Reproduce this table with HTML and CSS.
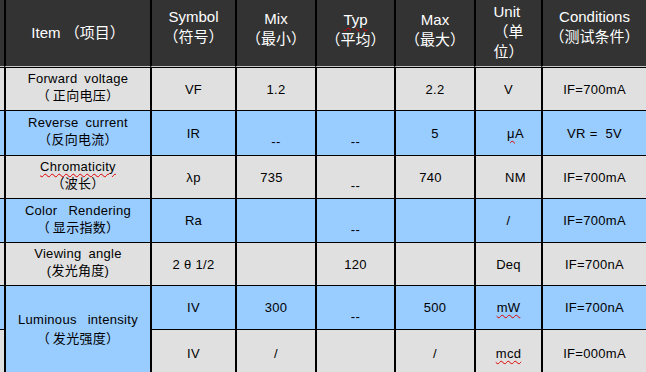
FILE: index.html
```html
<!DOCTYPE html>
<html>
<head>
<meta charset="utf-8">
<link rel="stylesheet" href="styles.css">
</head>
<body>
<div class="sheet">
  <div class="c s h"></div>
  <div class="c h">Item （项目）</div>
  <div class="c h p12">Symbol<br>（符号）</div>
  <div class="c h p9">Mix<br>（最小）</div>
  <div class="c h p7"><span><span class="sq">Typ</span><br>（平均）</span></div>
  <div class="c h p7">Max<br>（最大）</div>
  <div class="c h p2"><span class="ublk">Unit<br>（单<br>位）</span></div>
  <div class="c h p12">Conditions<br>（测试条件）</div>

  <div class="c s g"></div>
  <div class="c g lbl"><span>Forward voltage<br><span class="cn">（ 正向电压）</span></span></div>
  <div class="c g">VF</div>
  <div class="c g">1.2</div>
  <div class="c g"></div>
  <div class="c g">2.2</div>
  <div class="c g">V</div>
  <div class="c g">IF=700mA</div>

  <div class="c s b"></div>
  <div class="c b lbl">Reverse current<br>（反向电流）</div>
  <div class="c b">IR</div>
  <div class="c b low">--</div>
  <div class="c b low">--</div>
  <div class="c b">5</div>
  <div class="c b rt"><span class="sq">μ</span>A</div>
  <div class="c b">VR =&nbsp; 5V</div>

  <div class="c s g"></div>
  <div class="c g lbl"><span><span class="sq">Chromaticity</span><br>（波长）</span></div>
  <div class="c g">λp</div>
  <div class="c g lf">735</div>
  <div class="c g low">--</div>
  <div class="c g lf">740</div>
  <div class="c g rt">NM</div>
  <div class="c g">IF=700mA</div>

  <div class="c s b"></div>
  <div class="c b lbl wide"><span>Color Rendering<br><span class="cn">（ 显示指数）</span></span></div>
  <div class="c b">Ra</div>
  <div class="c b"></div>
  <div class="c b low">--</div>
  <div class="c b"></div>
  <div class="c b">/</div>
  <div class="c b">IF=700mA</div>

  <div class="c s g"></div>
  <div class="c g lbl">Viewing angle<br>(发光角度)</div>
  <div class="c g">2 θ 1/2</div>
  <div class="c g"></div>
  <div class="c g">120</div>
  <div class="c g"></div>
  <div class="c g">Deq</div>
  <div class="c g">IF=700nA</div>

  <div class="c s b"></div>
  <div class="c b lbl wide span2"><span>Luminous intensity<br><span class="cn">（ 发光强度）</span></span></div>
  <div class="c b">IV</div>
  <div class="c b">300</div>
  <div class="c b low">--</div>
  <div class="c b">500</div>
  <div class="c b"><span class="sq">mW</span></div>
  <div class="c b">IF=700nA</div>

  <div class="c s g"></div>
  <div class="c g dn">IV</div>
  <div class="c g dn">/</div>
  <div class="c g"></div>
  <div class="c g dn">/</div>
  <div class="c g dn"><span class="sq">mcd</span></div>
  <div class="c g dn">IF=000mA</div>
</div>
</body>
</html>
```
FILE: styles.css
```css
* { box-sizing: border-box; }
html, body { margin: 0; padding: 0; }
body {
  background: #fff;
  width: 646px;
  height: 372px;
  overflow: hidden;
  font-family: "Liberation Sans", Arial, "Noto Sans CJK SC", sans-serif;
}
.sheet {
  display: grid;
  grid-template-columns: 4px 146px 85px 80px 79px 80px 67px 105px;
  grid-template-rows: 67px 43px 45px 43px 44px 43px 44px 43px;
}
.c {
  border-left: 2px solid #000;
  border-top: 1px solid #000;
  display: flex;
  align-items: center;
  justify-content: center;
  text-align: center;
  font-size: 13px;
  line-height: 17px;
  color: #000;
  letter-spacing: 0.3px;
  white-space: nowrap;
}
.s { border-left: 0; }
.h {
  background: #333;
  color: #fff;
  border-top: 0;
  border-bottom: 1px solid #c8c8c8;
  font-size: 15px;
  line-height: 20px;
  letter-spacing: 0;
}
.g { background: #e0e0e0; }
.b { background: #99ccff; }
.p12 { padding-bottom: 12px; }
.p9 { padding-bottom: 9px; }
.p7 { padding-bottom: 7px; }
.p2 { padding-bottom: 2px; }
.ublk { display: inline-block; text-align: left; }
.lbl { padding-bottom: 4px; word-spacing: 3px; }
.wide { word-spacing: 7px; }
.cn { word-spacing: -1px; }
.span2 { grid-row: span 2; line-height: 19px; padding-bottom: 0; }
.low { padding-top: 17px; }
.dn { padding-top: 4px; }
.rt { padding-left: 14px; }
.lf { padding-right: 9px; }
.sq {
  text-decoration: underline wavy #e00000;
  text-decoration-thickness: 1px;
  text-underline-offset: 2px;
}
```
